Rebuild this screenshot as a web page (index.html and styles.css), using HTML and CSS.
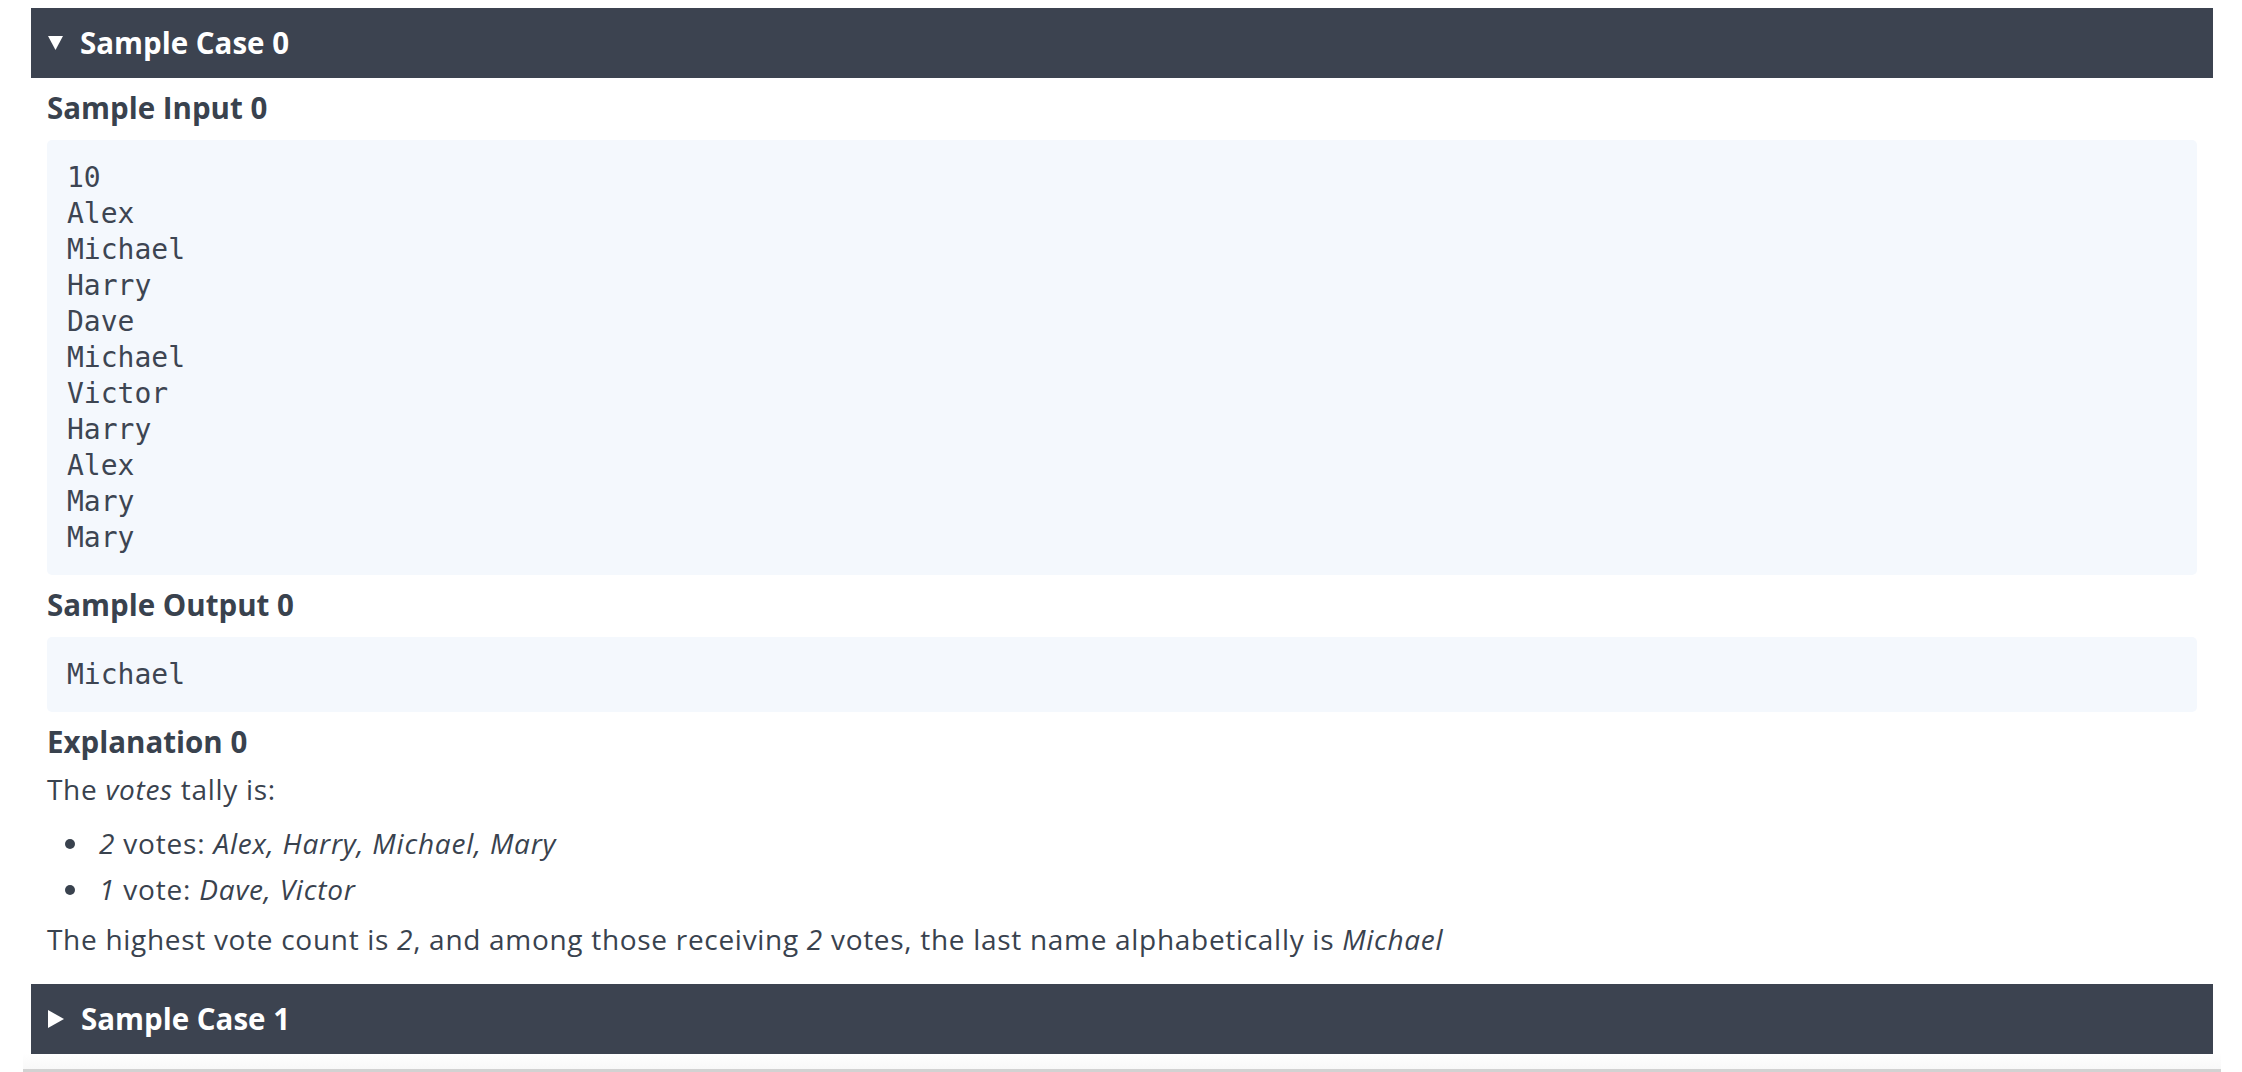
FILE: index.html
```html
<!DOCTYPE html>
<html lang="en">
<head>
<meta charset="utf-8">
<title>Sample Cases</title>
<link rel="stylesheet" href="styles.css">
</head>
<body>
<div class="page">
  <section class="case open">
    <div class="case-head">
      <svg class="tri" width="15" height="14" viewBox="0 0 15 14"><path d="M0 0 L15 0 L7.5 14 Z" fill="#fff"/></svg>
      <span class="case-title">Sample Case 0</span>
    </div>
    <div class="case-body">
      <h3 class="label">Sample Input 0</h3>
      <pre class="code">10
Alex
Michael
Harry
Dave
Michael
Victor
Harry
Alex
Mary
Mary</pre>
      <h3 class="label">Sample Output 0</h3>
      <pre class="code">Michael</pre>
      <h3 class="label expl">Explanation 0</h3>
      <p class="text">The <em>votes</em> tally is:</p>
      <ul class="list">
        <li><em>2</em> votes: <em>Alex, Harry, Michael, Mary</em></li>
        <li><em>1</em> vote: <em>Dave, Victor</em></li>
      </ul>
      <p class="text last">The highest vote count is <em>2</em>, and among those receiving <em>2</em> votes, the last name alphabetically is <em>Michael</em></p>
    </div>
  </section>
  <section class="case">
    <div class="case-head">
      <svg class="tri" width="16" height="18" viewBox="0 0 16 18"><path d="M0 0 L16 9 L0 18 Z" fill="#fff"/></svg>
      <span class="case-title">Sample Case 1</span>
    </div>
  </section>
  <div class="shelf"></div>
</div>
</body>
</html>
```

FILE: styles.css
```css
html, body {
  margin: 0;
  padding: 0;
  background: #ffffff;
}
body {
  font-family: "Open Sans", Lato, sans-serif;
  color: #39424e;
}
.page {
  padding: 8px 29px 0 31px;
}
.case-head {
  height: 70px;
  background: #3c4350;
  display: flex;
  align-items: center;
  padding-left: 17px;
  gap: 17px;
}
.tri {
  display: block;
  flex: none;
}
.case-title {
  color: #ffffff;
  font-weight: 700;
  font-size: 29.5px;
  line-height: 1;
}
.case-body {
  padding: 0 16px 25px 16px;
}
.label {
  font-size: 29.5px;
  font-weight: 700;
  line-height: 38px;
  margin: 11px 0 13px 0;
  color: #39424e;
}
.label.expl {
  margin-bottom: 8px;
}
.code {
  margin: 0;
  background: #f4f8fd;
  border-radius: 5px;
  padding: 20px 20px 19px 20px;
  font-family: "DejaVu Sans Mono", monospace;
  font-size: 28px;
  line-height: 36px;
  color: #3d4552;
}
.text {
  margin: 0;
  font-size: 28px;
  line-height: 40px;
  font-weight: 400;
  letter-spacing: 0.7px;
}
.text em, .list em {
  font-style: italic;
}
.list {
  margin: 14px 0 0 0;
  padding: 0 0 0 52px;
  font-size: 28px;
  line-height: 40px;
  letter-spacing: 0.8px;
  list-style: none;
}
.list li {
  position: relative;
  margin-bottom: 6px;
}
.list li::before {
  content: "";
  position: absolute;
  left: -34px;
  top: 16px;
  width: 10px;
  height: 10px;
  border-radius: 50%;
  background: #39424e;
}
.list li:last-child {
  margin-bottom: 0;
}
.text.last {
  margin-top: 10px;
}
.shelf {
  height: 15px;
  margin: 0 -8px 0 -8px;
  width: 2198px;
  background: linear-gradient(#ffffff, #f8f8f8);
  border-bottom: 3px solid #d2d2d2;
}
```
